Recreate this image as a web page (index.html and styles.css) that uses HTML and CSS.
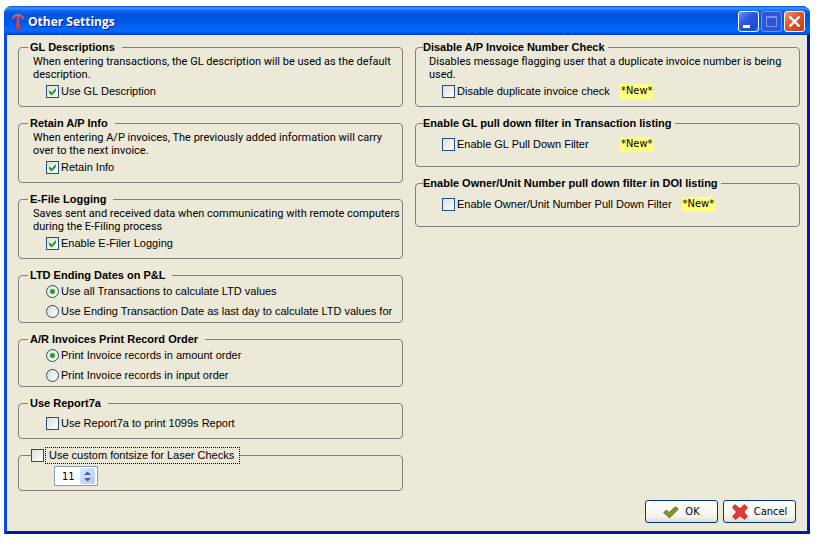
FILE: index.html
```
<!DOCTYPE html>
<html lang="en">
<head>
  <meta charset="utf-8">
  <title>Other Settings</title>
  <link rel="stylesheet" href="styles.css">
</head>
<body>
  <form class="window">
    <header class="titlebar">
      <svg class="logo" viewBox="0 0 14 17" width="14" height="17">
        <path d="M1.500 6 Q2 2.500 7 2.500 Q12 2.500 12.500 6" fill="none" stroke="#c45c78" stroke-width="1.800"/>
        <path d="M5.500 2 H8.500 V10 L10 16 H4 L5.500 10 Z" fill="#b03850"/>
        <path d="M7 3 V15" stroke="#d8606c"/>
        <path d="M4 2 H10" stroke="#e08494"/>
      </svg>
      <h1>Other Settings</h1>
      <div class="caption-buttons">
        <button type="button" class="cap" aria-label="Minimize"><svg viewBox="0 0 21 21"><path d="M5 14 H12 V17 H5 Z" fill="#fff"/></svg></button>
        <button type="button" class="cap cap-off" aria-label="Maximize" disabled><svg viewBox="0 0 21 21"><path d="M5.500 6 V15.500 H15.500 V6" fill="none" stroke="#7c94e6"/><path d="M5 5 H16 V7 H5 Z" fill="#7c94e6"/></svg></button>
        <button type="button" class="cap cap-close" aria-label="Close"><svg viewBox="0 0 21 21"><path d="M5.500 5.500 L15.500 15.500 M15.500 5.500 L5.500 15.500" stroke="#fff" stroke-width="2.400"/></svg></button>
      </div>
    </header>

    <main class="client">
      <div class="columns">
        <div class="col">
          <fieldset>
            <legend>GL Descriptions</legend>
            <p>When entering transactions, the GL description will be used as the default description.</p>
            <div class="option"><input type="checkbox" id="gl" checked><label for="gl">Use GL Description</label></div>
          </fieldset>
          <fieldset>
            <legend>Retain A/P Info</legend>
            <p>When entering A/P invoices, The previously added information will carry over to the next invoice.</p>
            <div class="option"><input type="checkbox" id="retain" checked><label for="retain">Retain Info</label></div>
          </fieldset>
          <fieldset>
            <legend>E-File Logging</legend>
            <p>Saves sent and received data when communicating with remote computers during the E-Filing process</p>
            <div class="option"><input type="checkbox" id="efile" checked><label for="efile">Enable E-Filer Logging</label></div>
          </fieldset>
          <fieldset class="radios">
            <legend>LTD Ending Dates on P&amp;L</legend>
            <div class="option"><input type="radio" name="ltd" id="ltd-all" checked><label for="ltd-all">Use all Transactions to calculate LTD values</label></div>
            <div class="option"><input type="radio" name="ltd" id="ltd-end"><label for="ltd-end">Use Ending Transaction Date as last day to calculate LTD values for</label></div>
          </fieldset>
          <fieldset class="radios">
            <legend>A/R Invoices Print Record Order</legend>
            <div class="option"><input type="radio" name="order" id="order-amount" checked><label for="order-amount">Print Invoice records in amount order</label></div>
            <div class="option"><input type="radio" name="order" id="order-input"><label for="order-input">Print Invoice records in input order</label></div>
          </fieldset>
          <fieldset class="single">
            <legend>Use Report7a</legend>
            <div class="option"><input type="checkbox" id="r7a"><label for="r7a">Use Report7a to print 1099s Report</label></div>
          </fieldset>
          <fieldset class="laser">
            <legend><input type="checkbox" id="laser"><label for="laser">Use custom fontsize for Laser Checks</label></legend>
            <div class="spinner">
              <input type="text" value="11" aria-label="Font size">
              <div class="steps">
                <button type="button" aria-label="Increase"><svg viewBox="0 0 15 7"><path d="M4 6 L7.500 2.500 L11 6 Z"/></svg></button>
                <button type="button" aria-label="Decrease"><svg viewBox="0 0 15 7"><path d="M4 1 L7.500 4.500 L11 1 Z"/></svg></button>
              </div>
            </div>
          </fieldset>
        </div>

        <div class="col col-right">
          <fieldset>
            <legend>Disable A/P Invoice Number Check</legend>
            <p>Disables message flagging user that a duplicate invoice number is being used.</p>
            <div class="option"><input type="checkbox" id="dup"><label for="dup">Disable duplicate invoice check</label><span class="new">*New*</span></div>
          </fieldset>
          <fieldset class="filter">
            <legend>Enable GL pull down filter in Transaction listing</legend>
            <div class="option"><input type="checkbox" id="glf"><label for="glf">Enable GL Pull Down Filter</label><span class="new">*New*</span></div>
          </fieldset>
          <fieldset class="filter">
            <legend>Enable Owner/Unit Number pull down filter in DOI listing</legend>
            <div class="option"><input type="checkbox" id="owner"><label for="owner">Enable Owner/Unit Number Pull Down Filter</label><span class="new">*New*</span></div>
          </fieldset>
        </div>
      </div>

      <div class="actions">
        <button type="submit" class="btn">
          <svg viewBox="0 0 16 16" width="16" height="16"><path d="M1 8.500 L3.500 6.500 L6 9 L12.500 3 L15 5 L6.500 13.500 Z" fill="#84962c" stroke="#75882a" stroke-width="1.400" stroke-linejoin="round"/></svg>
          <span>OK</span>
        </button>
        <button type="button" class="btn">
          <svg viewBox="0 0 16 16" width="16" height="16"><path d="M3 1 L8 5 L12.500 1 L15 3.500 L11.500 8 L15 12.500 L12.500 15 L8 11.500 L3.500 15 L1 12.500 L5 8 L1 3.500 Z" fill="#e23a3a" stroke="#d03434" stroke-width="1.400" stroke-linejoin="round"/></svg>
          <span>Cancel</span>
        </button>
      </div>
    </main>
  </form>
</body>
</html>
```
FILE: styles.css
```
*{
  box-sizing: border-box;
  margin: 0;
  padding: 0;
}
body{
  background: #fff;
  color: #000;
  font: 11px/13px "Liberation Sans", Arial, sans-serif;
}
button, input{
  font: inherit;
  color: inherit;
}
svg{
  display: block;
}

/* window frame */
.window{
  display: flex;
  flex-direction: column;
  min-height: calc(100vh - 21px);
  margin: 6px 9px 15px 4px;
  border: 3px solid #0a34d0;
  border-color: #0a4ce8 #0018a8 #0018a8 #0a4ce8;
  border-top: 0;
  border-radius: 8px 8px 0 0;
  background: #0a54e8;
}
.titlebar{
  display: flex;
  align-items: center;
  height: 29px;
  margin: 0 -3px;
  padding: 2px 5px 0 7px;
  border-radius: 8px 8px 0 0;
  background: linear-gradient(#0a4cd8 0, #3c94ff 2px, #0c64ee 5px, #0054e0 9px, #0058ea 16px, #0468ff 24px, #0460f8 26px, #003cc8 29px);
}
.titlebar h1{
  flex: 1;
  margin-left: 3px;
  color: #fff;
  font: bold 12px/16px "Open Sans", "Noto Sans", sans-serif;
  text-shadow: 1px 1px #0a2484;
}
.caption-buttons{
  display: flex;
  gap: 2px;
}
.cap{
  width: 21px;
  height: 21px;
  border: 1px solid #fff;
  border-radius: 3px;
  background: linear-gradient(135deg, #6c94f4, #2c58e0 40%, #1c4cd4 80%, #2c68f0);
}
.cap svg{
  width: 21px;
  height: 21px;
  margin: -1px;
}
.cap-off{
  border-color: #7c94e6;
  background: #2c54dc;
}
.cap-close{
  background: linear-gradient(135deg, #f09878, #e05830 40%, #d04418 80%, #c84010);
}

.client{
  flex: 1;
  display: flex;
  flex-direction: column;
  justify-content: space-between;
  padding: 6px 7px 8px 11px;
  background: #ece9d8;
}
.columns{
  display: grid;
  grid-template-columns: 1fr 1fr;
  gap: 12px;
}
.col{
  display: flex;
  flex-direction: column;
  gap: 10px;
}

/* group boxes */
fieldset{
  min-width: 0;
  padding: 1px 0 8px 14px;
  border: 1px solid #808080;
  border-radius: 4px;
}
legend{
  margin-left: -5px;
  padding: 0 7px 0 2px;
  font-weight: bold;
}
.col-right legend{
  margin-left: -6px;
  padding: 0 3px 0 0;
}
fieldset p{
  font-family: Roboto, Tahoma, sans-serif;
}
.option{
  display: flex;
  align-items: center;
  height: 13px;
  margin: 4px 0 0 13px;
}
.option label{
  margin-left: 2px;
}
.radios{
  padding: 3px 0 4px 14px;
}
.radios .option{
  margin-top: 0;
}
.radios .option + .option{
  margin-top: 7px;
}
.single{
  padding: 3px 0 8px 14px;
}
.filter{
  padding: 4px 0 15px 13px;
}
.col-right fieldset{
  padding-left: 13px;
}

input[type="checkbox"], input[type="radio"]{
  flex: none;
  width: 13px;
  height: 13px;
  appearance: none;
  border: 1px solid #1c5180;
  background: linear-gradient(135deg, #dcdcd7, #fff);
}
input[type="checkbox"]:checked{
  background: url("data:image/svg+xml,%3Csvg xmlns='http://www.w3.org/2000/svg' viewBox='0 0 11 11'%3E%3Cpath d='M2 4 L4.500 6.500 L9 2 V5 L4.500 9.500 L2 7 Z' fill='%2321a121'/%3E%3C/svg%3E"), linear-gradient(135deg, #dcdcd7, #fff);
}
input[type="radio"]{
  border-radius: 50%;
}
input[type="radio"]:checked{
  background: radial-gradient(circle, #21a121 2px, transparent 3px), linear-gradient(135deg, #dcdcd7, #fff);
}

.new{
  margin-left: 10px;
  padding: 0 1px 2px;
  background: #ffff80;
  font-family: "DejaVu Sans Condensed", Tahoma, sans-serif;
}
.col-right label{
  min-width: 153px;
}

/* group box with a tick box for a title */
.laser{
  margin-top: -2px;
  padding: 2px 0 4px 14px;
}
.laser legend{
  display: flex;
  align-items: center;
  margin-left: -2px;
  padding: 0;
  font-weight: normal;
}
.laser legend label{
  margin-left: 1px;
  padding: 1px 5px 1px 3px;
  border: 1px dotted #000;
}
.spinner{
  display: flex;
  width: 44px;
  height: 20px;
  margin-left: 21px;
  padding: 1px 2px 1px 0;
  border: 1px solid #7f9db9;
  background: #fff;
}
.spinner input{
  flex: 1;
  min-width: 0;
  border: 0;
  padding-left: 7px;
  background: none;
  font-family: "DejaVu Sans Condensed", Tahoma, sans-serif;
}
.steps{
  width: 15px;
  border-radius: 2px;
  background: linear-gradient(135deg, #dce8ff, #b4c8f6);
}
.steps button{
  display: block;
  width: 100%;
  height: 8px;
  border: 0;
  background: none;
}
.steps path{
  fill: #4d6185;
}

.actions{
  display: flex;
  justify-content: flex-end;
  gap: 5px;
  padding-right: 4px;
}
.btn{
  display: flex;
  align-items: center;
  justify-content: center;
  gap: 6px;
  width: 73px;
  height: 23px;
  border: 1px solid #003c74;
  border-radius: 3px;
  background: linear-gradient(#fff, #f4f3ee 75%, #dcd8cc);
  font-family: "DejaVu Sans Condensed", Tahoma, sans-serif;
}
```
